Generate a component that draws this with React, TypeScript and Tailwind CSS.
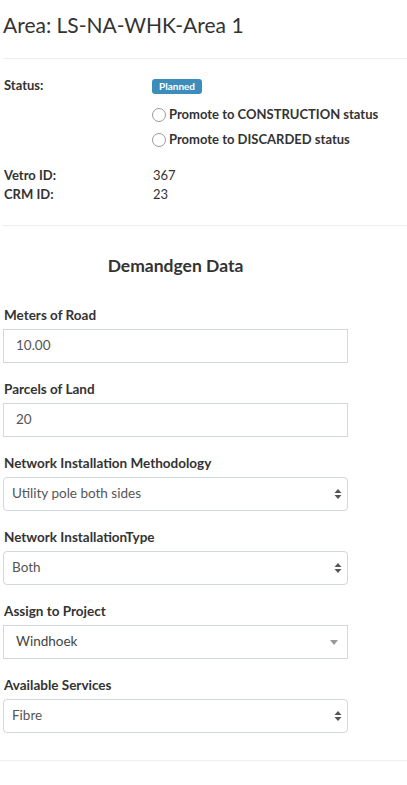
import React from 'react';

const font = { fontFamily: 'Lato, "Liberation Sans", sans-serif' };

const UpDown = () => (
  <svg width="8" height="12" viewBox="0 0 8 12" className="absolute right-[5px] top-1/2 -translate-y-1/2">
    <path d="M4 1 L7.5 5 H0.5 Z" fill="#555" />
    <path d="M4 11 L7.5 7 H0.5 Z" fill="#555" />
  </svg>
);

const Radio = ({ label }: { label: string }) => (
  <div className="flex items-center h-[25px]">
    <span className="w-[14px] h-[14px] rounded-full border border-[#9a9a9a] bg-white shrink-0" />
    <span className="ml-[3px] font-bold text-[13px] text-[#333]">{label}</span>
  </div>
);

const Field = ({ label, children }: { label: string; children: React.ReactNode }) => (
  <div className="mb-[17px]">
    <div className="font-bold text-[13.5px] text-[#333] leading-[18px] mb-[5px] pl-px">{label}</div>
    {children}
  </div>
);

const TextBox = ({ value }: { value: string }) => (
  <div className="h-[34px] border border-[#d2d6de] flex items-center pl-[12px] text-[13.5px] text-[#555]">
    {value}
  </div>
);

const SelectBox = ({ value }: { value: string }) => (
  <div className="relative h-[34px] border border-[#d2d6de] rounded-[4px] flex items-center pl-[8px] text-[13.5px] text-[#555]">
    {value}
    <UpDown />
  </div>
);

export default function App() {
  return (
    <div className="w-[407px] min-h-[785px] bg-white text-[#333]" style={font}>
      <h3 className="text-[21px] leading-[26px] pl-[3px] pt-[12px] pb-[20px] text-[#333]">
        Area: LS-NA-WHK-Area 1
      </h3>
      <div className="ml-[3px] border-t border-[#eeeeee]" />

      <div className="pl-[4px] pt-[17px] text-[13px]">
        <div className="grid grid-cols-[148px_1fr]">
          <div className="font-bold leading-[18px]">Status:</div>
          <div>
            <span className="inline-block bg-[#3c8dbc] text-white font-bold text-[10px] leading-[15px] px-[7px] rounded-[3px]">
              Planned
            </span>
            <div className="mt-[7px]">
              <Radio label="Promote to CONSTRUCTION status" />
              <Radio label="Promote to DISCARDED status" />
            </div>
          </div>
        </div>
        <div className="grid grid-cols-[149px_1fr] mt-[13px] leading-[19px]">
          <div className="font-bold">Vetro ID:</div>
          <div>367</div>
          <div className="font-bold">CRM ID:</div>
          <div>23</div>
        </div>
      </div>

      <div className="ml-[3px] mt-[21px] border-t border-[#eeeeee]" />

      <div className="w-[348px] pl-[3px]">
        <div className="text-center font-bold text-[17.5px] leading-[20px] pt-[30px] pb-[30px]">
          Demandgen Data
        </div>

        <Field label="Meters of Road">
          <TextBox value="10.00" />
        </Field>
        <Field label="Parcels of Land">
          <TextBox value="20" />
        </Field>
        <Field label="Network Installation Methodology">
          <SelectBox value="Utility pole both sides" />
        </Field>
        <Field label="Network InstallationType">
          <SelectBox value="Both" />
        </Field>
        <Field label="Assign to Project">
          <div className="relative h-[34px] border border-[#d2d6de] flex items-center pl-[12px] text-[13.5px] text-[#444]">
            Windhoek
            <svg width="8" height="5" viewBox="0 0 8 5" className="absolute right-[9px] top-[14px]">
              <path d="M0 0 H8 L4 5 Z" fill="#999" />
            </svg>
          </div>
        </Field>
        <Field label="Available Services">
          <SelectBox value="Fibre" />
        </Field>
      </div>

      <div className="mt-[27px] border-t border-[#eeeeee]" />
    </div>
  );
}
